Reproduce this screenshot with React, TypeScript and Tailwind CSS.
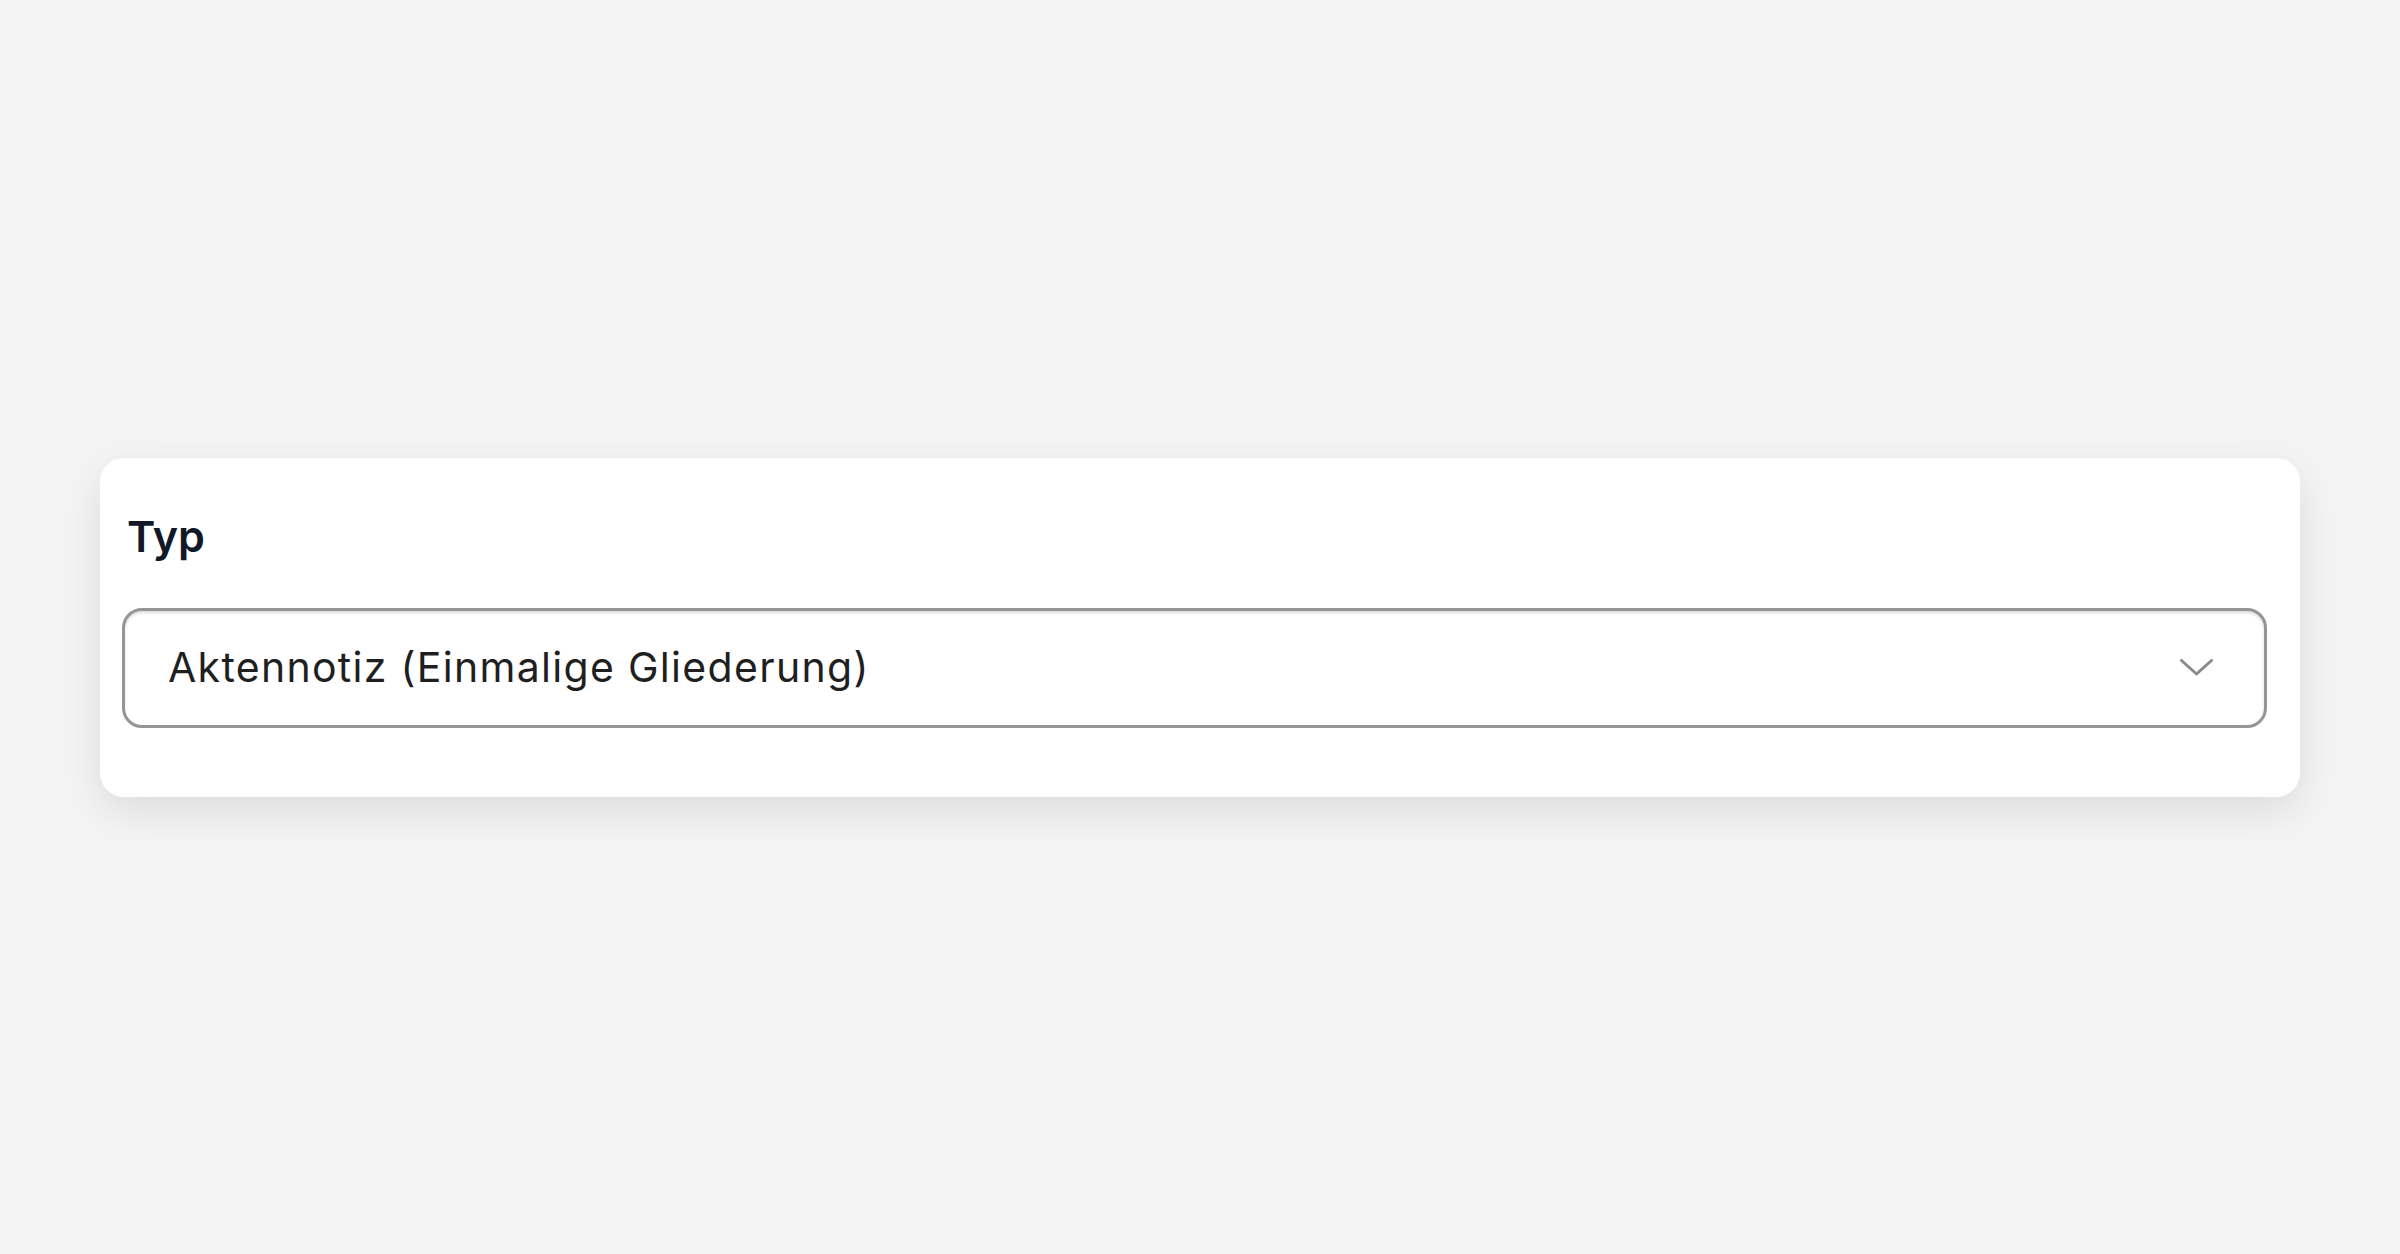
import React from 'react'

function Chevron() {
    return (
        <svg width="33" height="17" viewBox="0 0 33 17" fill="none" className="text-[#8a8a8a]">
            <path d="M1.5 1.5 L16.5 15 L31.5 1.5" stroke="currentColor" strokeWidth="3" strokeLinecap="round" strokeLinejoin="round" />
        </svg>
    )
}

export default function App() {
    return (
        <div
            className="w-full h-[1254px] bg-[#f4f4f4] flex items-center justify-center"
            style={{ fontFamily: 'Inter, "Noto Sans", sans-serif' }}
        >
            <div className="w-[2200px] bg-white rounded-[24px] shadow-[0_14px_44px_rgba(0,0,0,0.10)] pt-[46px] pb-[69px] pl-[22px] pr-[33px]">
                <div className="pl-[5px] text-[43px] leading-[64px] font-semibold text-[#111827]">Typ</div>
                <div className="mt-[40px] h-[120px] rounded-[20px] border-[3px] border-[#959595] shadow-[inset_0_2px_3px_rgba(0,0,0,0.14)] flex items-center justify-between pl-[43px] pr-[51px]">
                    <span className="text-[41px] text-[#1f1f1f] tracking-[1.3px]">Aktennotiz (Einmalige Gliederung)</span>
                    <Chevron />
                </div>
            </div>
        </div>
    )
}
